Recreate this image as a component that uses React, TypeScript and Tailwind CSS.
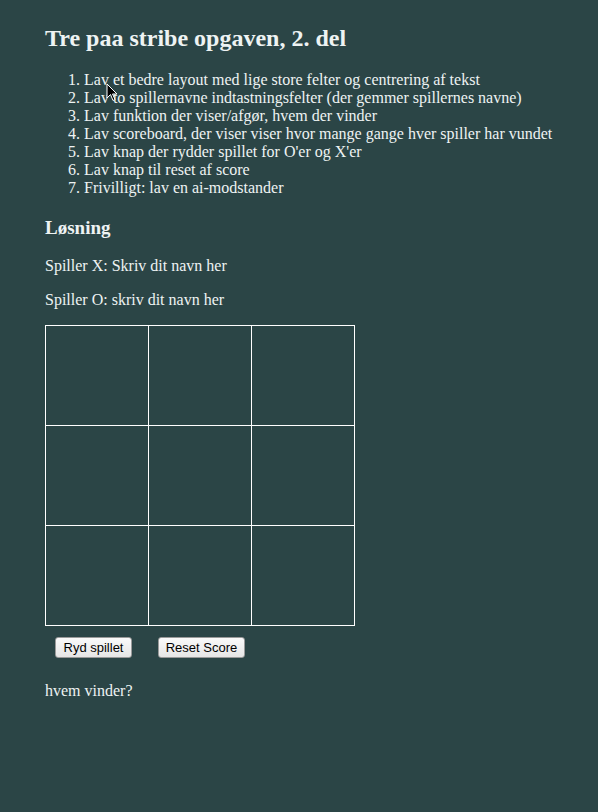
const tasks = [
  "Lav et bedre layout med lige store felter og centrering af tekst",
  "Lav to spillernavne indtastningsfelter (der gemmer spillernes navne)",
  "Lav funktion der viser/afgør, hvem der vinder",
  "Lav scoreboard, der viser viser hvor mange gange hver spiller har vundet",
  "Lav knap der rydder spillet for O'er og X'er",
  "Lav knap til reset af score",
  "Frivilligt: lav en ai-modstander",
];

export default function App() {
  return (
    <div className="relative min-h-[812px] bg-[#2b4546] pl-[45px] pt-[24px] text-[#eef3f3] font-['Liberation_Serif',serif]">
      <h1 className="text-[24px] font-bold leading-[28px]">Tre paa stribe opgaven, 2. del</h1>

      <ol className="mt-[19px] list-decimal pl-[39px] text-[16px] leading-[18px]">
        {tasks.map((t) => (
          <li key={t}>{t}</li>
        ))}
      </ol>

      <h3 className="mt-[20px] text-[19px] font-bold leading-[22px]">Løsning</h3>

      <p className="mt-[18px] text-[16px] leading-[18px]">Spiller X: Skriv dit navn her</p>
      <p className="mt-[16px] text-[16px] leading-[18px]">Spiller O: skriv dit navn her</p>

      <div className="mt-[16px] grid w-[310px] grid-cols-3 border-l border-t border-white">
        {Array.from({ length: 9 }).map((_, i) => (
          <div key={i} className="h-[100px] border-r border-b border-white" />
        ))}
      </div>

      <div className="mt-[11px] flex gap-[26px] pl-[10px] font-['Liberation_Sans',sans-serif] text-[13px] text-black">
        <button className="h-[21px] w-[77px] rounded-[3px] border border-[#9a9a9a] bg-gradient-to-b from-[#fafafa] to-[#e6e6e6] leading-[19px]">
          Ryd spillet
        </button>
        <button className="h-[21px] w-[87px] rounded-[3px] border border-[#9a9a9a] bg-gradient-to-b from-[#fafafa] to-[#e6e6e6] leading-[19px]">
          Reset Score
        </button>
      </div>

      <p className="mt-[24px] text-[16px] leading-[18px]">hvem vinder?</p>

      {/* mouse pointer captured in the screenshot */}
      <svg className="absolute left-[106px] top-[83px]" width="12" height="19" viewBox="0 0 12 19">
        <path d="M1 1 L1 15 L4.5 11.5 L7 17.5 L9 16.5 L6.5 11 L11 11 Z" fill="#000" stroke="#fff" strokeWidth="1" />
      </svg>
    </div>
  );
}
